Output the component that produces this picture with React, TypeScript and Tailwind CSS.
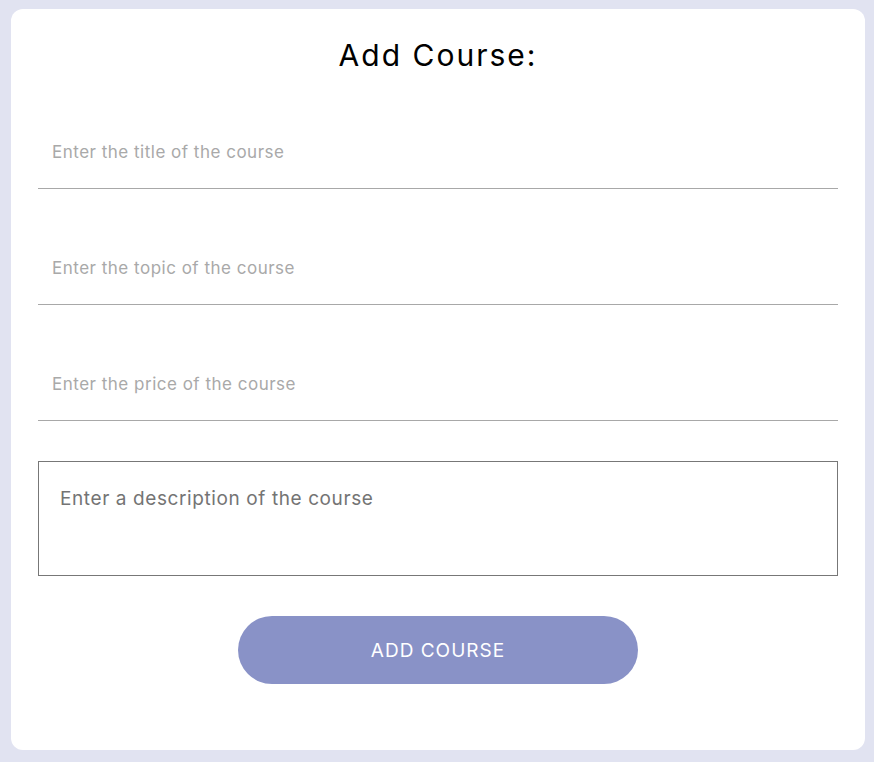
import React from "react";

const AddCourse = () => {
  const fields = [
    "Enter the title of the course",
    "Enter the topic of the course",
    "Enter the price of the course",
  ];

  return (
    <div className="min-h-screen bg-[#e1e3f1] pl-[11px] pr-[9px] pt-[9px] pb-[12px] font-['Inter',sans-serif]">
      <div className="bg-white rounded-[12px] px-[27px] pt-[28px] pb-[66px] flex flex-col">
        {/* Heading */}
        <h2 className="text-center text-[30px] leading-[36px] tracking-[2px] text-black">
          Add Course:
        </h2>

        {/* Inputs */}
        {fields.map((placeholder) => (
          <input
            key={placeholder}
            type="text"
            placeholder={placeholder}
            className="mt-[44px] h-[72px] w-full border-b border-[#a8a8a8] px-[14px] pb-[2px] text-[17px] tracking-[0.5px] text-gray-800 placeholder:text-[#a9a9a9] outline-none"
          />
        ))}

        <textarea
          placeholder="Enter a description of the course"
          className="mt-[40px] h-[115px] w-full border border-[#777777] px-[21px] pt-[25px] text-[19px] leading-[24px] tracking-[0.6px] text-gray-800 placeholder:text-[#747474] outline-none resize-none"
        />

        {/* Submit */}
        <div className="mt-[40px] flex justify-center">
          <button className="w-[400px] h-[68px] rounded-full bg-[#8992c7] pt-[3px] text-white text-[19px] tracking-[1px] uppercase">
            Add Course
          </button>
        </div>
      </div>
    </div>
  );
};

export default function App() {
  return <AddCourse />;
}
